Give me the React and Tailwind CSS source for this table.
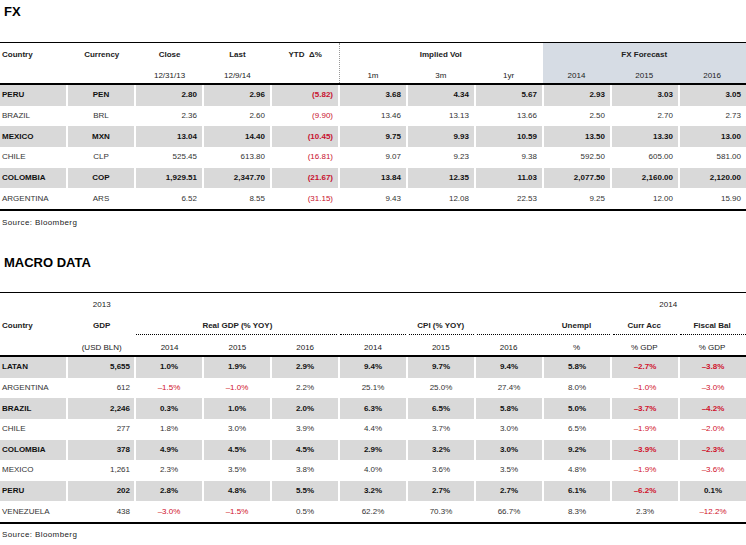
import React from "react";

const fxRows = [
    { country: "PERU", ccy: "PEN", vals: ["2.80", "2.96", "(5.82)", "3.68", "4.34", "5.67", "2.93", "3.03", "3.05"] },
    { country: "BRAZIL", ccy: "BRL", vals: ["2.36", "2.60", "(9.90)", "13.46", "13.13", "13.66", "2.50", "2.70", "2.73"] },
    { country: "MEXICO", ccy: "MXN", vals: ["13.04", "14.40", "(10.45)", "9.75", "9.93", "10.59", "13.50", "13.30", "13.00"] },
    { country: "CHILE", ccy: "CLP", vals: ["525.45", "613.80", "(16.81)", "9.07", "9.23", "9.38", "592.50", "605.00", "581.00"] },
    { country: "COLOMBIA", ccy: "COP", vals: ["1,929.51", "2,347.70", "(21.67)", "13.84", "12.35", "11.03", "2,077.50", "2,160.00", "2,120.00"] },
    { country: "ARGENTINA", ccy: "ARS", vals: ["6.52", "8.55", "(31.15)", "9.43", "12.08", "22.53", "9.25", "12.00", "15.90"] },
];

const macroRows = [
    { country: "LATAN", gdp: "5,655", vals: ["1.0%", "1.9%", "2.9%", "9.4%", "9.7%", "9.4%", "5.8%", "–2.7%", "–3.8%"] },
    { country: "ARGENTINA", gdp: "612", vals: ["–1.5%", "–1.0%", "2.2%", "25.1%", "25.0%", "27.4%", "8.0%", "–1.0%", "–3.0%"] },
    { country: "BRAZIL", gdp: "2,246", vals: ["0.3%", "1.0%", "2.0%", "6.3%", "6.5%", "5.8%", "5.0%", "–3.7%", "–4.2%"] },
    { country: "CHILE", gdp: "277", vals: ["1.8%", "3.0%", "3.9%", "4.4%", "3.7%", "3.0%", "6.5%", "–1.9%", "–2.0%"] },
    { country: "COLOMBIA", gdp: "378", vals: ["4.9%", "4.5%", "4.5%", "2.9%", "3.2%", "3.0%", "9.2%", "–3.9%", "–2.3%"] },
    { country: "MEXICO", gdp: "1,261", vals: ["2.3%", "3.5%", "3.8%", "4.0%", "3.6%", "3.5%", "4.8%", "–1.9%", "–3.6%"] },
    { country: "PERU", gdp: "202", vals: ["2.8%", "4.8%", "5.5%", "3.2%", "2.7%", "2.7%", "6.1%", "–6.2%", "0.1%"] },
    { country: "VENEZUELA", gdp: "438", vals: ["–3.0%", "–1.5%", "0.5%", "62.2%", "70.3%", "66.7%", "8.3%", "2.3%", "–12.2%"] },
];

const isNeg = (v) => v.startsWith("(") || v.startsWith("–");

const Source = ({ pt }) => (
    <div className={`${pt} pl-[2px] text-[8px] leading-[10px] text-[#222] tracking-[0.4px]`}>Source: Bloomberg</div>
);

const FxTable = () => (
    <div>
        <div className="h-[42px] pl-[4px] pt-[4px] text-[13px] leading-[15px] font-bold text-black">FX</div>
        <div className="border-t border-black grid grid-cols-11 grid-rows-[23px_17px] text-[8px] leading-[10px] font-bold text-[#222]">
            <div className="col-start-9 col-span-3 row-start-1 row-span-2 bg-[#d6dce4]" />
            <div className="col-start-6 col-span-3 row-start-1 row-span-2 border-l border-dotted border-[#999]" />
            <div className="col-start-1 row-start-1 self-center pl-[2px]">Country</div>
            <div className="col-start-2 row-start-1 self-center text-center">Currency</div>
            <div className="col-start-3 row-start-1 self-center text-center">Close</div>
            <div className="col-start-4 row-start-1 self-center text-center">Last</div>
            <div className="col-start-5 row-start-1 self-center text-center">YTD &nbsp;Δ%</div>
            <div className="col-start-6 col-span-3 row-start-1 self-center text-center">Implied Vol</div>
            <div className="col-start-9 col-span-3 row-start-1 self-center text-center">FX Forecast</div>
            <div className="col-start-3 row-start-2 self-end pb-[2px] text-center font-normal">12/31/13</div>
            <div className="col-start-4 row-start-2 self-end pb-[2px] text-center font-normal">12/9/14</div>
            {["1m", "3m", "1yr", "2014", "2015", "2016"].map((h, i) => (
                <div key={h} className="row-start-2 self-end pb-[2px] text-center font-normal" style={{ gridColumnStart: i + 6 }}>
                    {h}
                </div>
            ))}
        </div>
        <div className="border-t-2 border-black">
            {fxRows.map((r, idx) => {
                const shaded = idx % 2 === 0;
                const cell = shaded ? "bg-[#d9d9d9] font-bold text-[#111]" : "text-[#333]";
                return (
                    <div key={r.country} className="grid grid-cols-11 gap-x-[2px] h-[20.7px] text-[8px] leading-[10px]">
                        <div className={`${cell} flex items-center pl-[2px]`}>{r.country}</div>
                        <div className={`${cell} flex items-center justify-center`}>{r.ccy}</div>
                        {r.vals.map((v, i) => (
                            <div
                                key={i}
                                className={`${cell} flex items-center justify-end pr-[5px] ${isNeg(v) ? "text-[#c8102e]" : ""}`}
                            >
                                {v}
                            </div>
                        ))}
                    </div>
                );
            })}
        </div>
        <div className="border-t-2 border-black" />
        <Source pt="pt-[7px]" />
    </div>
);

const MacroTable = () => (
    <div className="mt-[27px]">
        <div className="h-[37px] pl-[4px] text-[13px] leading-[15px] font-bold text-black">MACRO DATA</div>
        <div className="border-t border-black grid grid-cols-11 grid-rows-[24px_18px_20px] text-[8px] leading-[10px] font-bold text-[#222]">
            <div className="col-start-2 row-start-1 self-center text-center font-normal">2013</div>
            <div className="col-start-10 col-span-2 row-start-1 self-center text-center pr-[20px] font-normal">2014</div>

            <div className="col-start-3 col-span-3 row-start-2 border-b border-dotted border-black mr-[2px]" />
            <div className="col-start-6 row-start-2 border-b border-dotted border-black ml-[1px] mr-[1px]" />
            <div className="col-start-7 row-start-2 border-b border-dotted border-black ml-[2px] mr-[1px]" />
            <div className="col-start-8 col-span-2 row-start-2 border-b border-dotted border-black ml-[2px]" />
            <div className="col-start-10 row-start-2 border-b border-dotted border-black ml-[3px] mr-[1px]" />
            <div className="col-start-11 row-start-2 border-b border-dotted border-black ml-[2px]" />

            <div className="col-start-1 row-start-2 self-center pl-[2px]">Country</div>
            <div className="col-start-2 row-start-2 self-center text-center">GDP</div>
            <div className="col-start-3 col-span-3 row-start-2 self-center text-center">Real GDP (% YOY)</div>
            <div className="col-start-6 col-span-3 row-start-2 self-center text-center">CPI (% YOY)</div>
            <div className="col-start-9 row-start-2 self-center text-center">Unempl</div>
            <div className="col-start-10 row-start-2 self-center text-center">Curr Acc</div>
            <div className="col-start-11 row-start-2 self-center text-center">Fiscal Bal</div>

            <div className="col-start-2 row-start-3 self-end pb-[2px] text-center font-normal">(USD BLN)</div>
            {["2014", "2015", "2016", "2014", "2015", "2016", "%", "% GDP", "% GDP"].map((h, i) => (
                <div key={i} className="row-start-3 self-end pb-[2px] text-center font-normal" style={{ gridColumnStart: i + 3 }}>
                    {h}
                </div>
            ))}
        </div>
        <div className="border-t-2 border-black">
            {macroRows.map((r, idx) => {
                const shaded = idx % 2 === 0;
                const cell = shaded ? "bg-[#d9d9d9] font-bold text-[#111]" : "text-[#333]";
                return (
                    <div key={r.country} className="grid grid-cols-11 gap-x-[2px] h-[20.6px] text-[8px] leading-[10px]">
                        <div className={`${cell} flex items-center pl-[2px]`}>{r.country}</div>
                        <div className={`${cell} flex items-center justify-end pr-[4px]`}>{r.gdp}</div>
                        {r.vals.map((v, i) => (
                            <div
                                key={i}
                                className={`${cell} flex items-center justify-center ${isNeg(v) ? "text-[#d0102a]" : ""}`}
                            >
                                {v}
                            </div>
                        ))}
                    </div>
                );
            })}
        </div>
        <div className="border-t-2 border-black" />
        <Source pt="pt-[6px]" />
    </div>
);

export default function App() {
    return (
        <div className="w-[746px] h-[545px] overflow-hidden bg-white font-['Liberation_Sans',Arial,sans-serif]">
            <FxTable />
            <MacroTable />
        </div>
    );
}
